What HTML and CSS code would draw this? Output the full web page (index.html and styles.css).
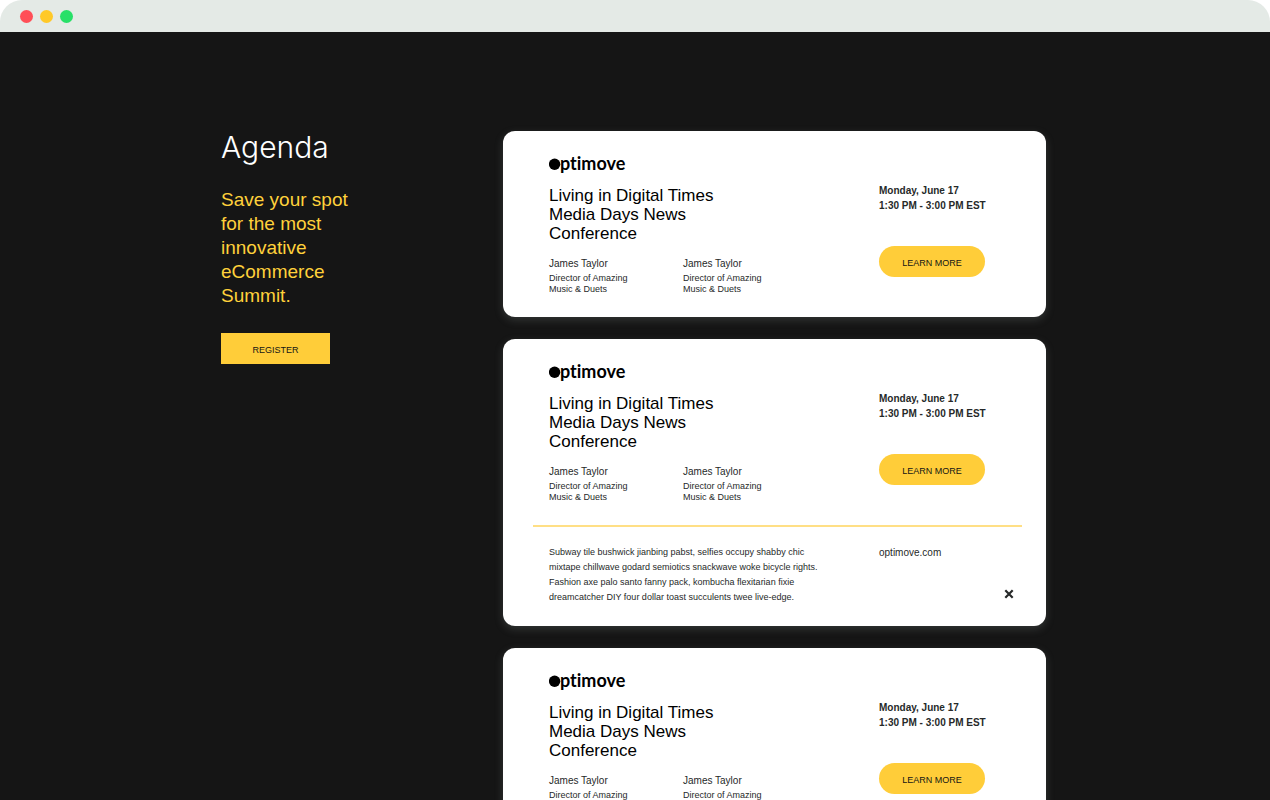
FILE: index.html
```html
<!DOCTYPE html>
<html lang="en">
<head>
<meta charset="utf-8">
<title>Agenda</title>
<link rel="stylesheet" href="styles.css">
</head>
<body>
<div class="window">
  <header class="titlebar">
    <span class="dot dot-red"></span>
    <span class="dot dot-yellow"></span>
    <span class="dot dot-green"></span>
  </header>
  <main class="page">
    <div class="container">
      <section class="intro">
        <h1 class="intro-title">Agenda</h1>
        <p class="intro-text">Save your spot for the most innovative eCommerce Summit.</p>
        <button class="register" type="button">REGISTER</button>
      </section>
      <section class="sessions">
        <article class="card">
          <div class="card-main">
            <div class="details">
              <svg class="logo" viewBox="0 0 80 26" role="img" aria-label="optimove"><circle cx="5.6" cy="15.2" r="5.7"/><text x="11" y="21" class="logo-text">ptimove</text></svg>
              <h2 class="title">Living in Digital Times Media Days News Conference</h2>
              <div class="speakers">
                <div class="speaker"><p class="name">James Taylor</p><p class="role">Director of Amazing Music &amp; Duets</p></div>
                <div class="speaker"><p class="name">James Taylor</p><p class="role">Director of Amazing Music &amp; Duets</p></div>
              </div>
            </div>
            <div class="schedule">
              <p class="time">Monday, June 17<br>1:30 PM - 3:00 PM EST</p>
              <button class="learn" type="button">LEARN MORE</button>
            </div>
          </div>
        </article>
        <article class="card">
          <div class="card-main">
            <div class="details">
              <svg class="logo" viewBox="0 0 80 26" role="img" aria-label="optimove"><circle cx="5.6" cy="15.2" r="5.7"/><text x="11" y="21" class="logo-text">ptimove</text></svg>
              <h2 class="title">Living in Digital Times Media Days News Conference</h2>
              <div class="speakers">
                <div class="speaker"><p class="name">James Taylor</p><p class="role">Director of Amazing Music &amp; Duets</p></div>
                <div class="speaker"><p class="name">James Taylor</p><p class="role">Director of Amazing Music &amp; Duets</p></div>
              </div>
            </div>
            <div class="schedule">
              <p class="time">Monday, June 17<br>1:30 PM - 3:00 PM EST</p>
              <button class="learn" type="button">LEARN MORE</button>
            </div>
          </div>
          <div class="card-more">
            <p class="summary">Subway tile bushwick jianbing pabst, selfies occupy shabby chic<br>mixtape chillwave godard semiotics snackwave woke bicycle rights.<br>Fashion axe palo santo fanny pack, kombucha flexitarian fixie<br>dreamcatcher DIY four dollar toast succulents twee live-edge.</p>
            <div class="more-side">
              <a class="site" href="#">optimove.com</a>
              <button class="close" type="button" aria-label="Close">
                <svg class="close-icon" viewBox="0 0 10 10" aria-hidden="true"><path d="M1.3 1.3 8.7 8.7M8.7 1.3 1.3 8.7"/></svg>
              </button>
            </div>
          </div>
        </article>
        <article class="card">
          <div class="card-main">
            <div class="details">
              <svg class="logo" viewBox="0 0 80 26" role="img" aria-label="optimove"><circle cx="5.6" cy="15.2" r="5.7"/><text x="11" y="21" class="logo-text">ptimove</text></svg>
              <h2 class="title">Living in Digital Times Media Days News Conference</h2>
              <div class="speakers">
                <div class="speaker"><p class="name">James Taylor</p><p class="role">Director of Amazing Music &amp; Duets</p></div>
                <div class="speaker"><p class="name">James Taylor</p><p class="role">Director of Amazing Music &amp; Duets</p></div>
              </div>
            </div>
            <div class="schedule">
              <p class="time">Monday, June 17<br>1:30 PM - 3:00 PM EST</p>
              <button class="learn" type="button">LEARN MORE</button>
            </div>
          </div>
        </article>
      </section>
    </div>
  </main>
</div>
</body>
</html>
```
FILE: styles.css
```css
* { box-sizing: border-box; margin: 0; padding: 0; }

body {
  background: #fff;
  color: #262929;
  font-family: "Liberation Sans", Arial, sans-serif;
}

button { border: 0; font-family: inherit; cursor: pointer; }

.window {
  display: flex;
  flex-direction: column;
  height: 100vh;
  overflow: hidden;
  border-radius: 22px 22px 0 0;
}

.titlebar {
  display: flex;
  flex: none;
  align-items: center;
  gap: 7px;
  height: 32px;
  padding: 0 20px;
  background: #e4eae6;
}

.dot { width: 13px; height: 13px; border-radius: 50%; }
.dot-red { background: #ff4f57; }
.dot-yellow { background: #ffc928; }
.dot-green { background: #28e068; }

.page {
  flex: 1;
  min-height: 0;
  padding: 99px 24px 0;
  background: #151515;
}

.container {
  display: grid;
  grid-template-columns: minmax(160px, 282px) minmax(0, 543px);
  max-width: 828px;
  margin: 0 auto;
}

.intro-title {
  color: #fff;
  font-family: Inter, "Liberation Sans", sans-serif;
  font-size: 30px;
  font-weight: 300;
  line-height: 32px;
}

.intro-text {
  max-width: 140px;
  margin-top: 25px;
  color: #ffd13b;
  font-size: 19px;
  line-height: 24px;
}

.register {
  width: 109px;
  height: 31px;
  margin-top: 25px;
  padding-top: 2px;
  background: #ffcd39;
  color: #151515;
  font-size: 9px;
}

.sessions { display: flex; flex-direction: column; gap: 22px; }

.card {
  border-radius: 12px;
  background: #fff;
  box-shadow: 0 3px 8px rgba(120, 130, 126, 0.3);
}

.card-main {
  display: grid;
  grid-template-columns: 330px 1fr;
  padding: 18px 24px 22px 46px;
}

.logo { display: block; width: 80px; height: 26px; fill: #000; }

.logo-text {
  font-family: Lato, sans-serif;
  font-size: 18px;
  font-variant-ligatures: none;
  font-weight: 700;
}

.title {
  max-width: 180px;
  margin-top: 11px;
  color: #000;
  font-size: 17px;
  font-weight: 400;
  line-height: 19px;
}

.speakers { display: grid; grid-template-columns: 134px 134px; margin-top: 14px; }

.speaker { max-width: 90px; }

.name { font-size: 10px; line-height: 14px; }

.role { margin-top: 2px; font-size: 9px; line-height: 11px; }

.time { margin-top: 34px; font-size: 10px; font-weight: 700; line-height: 15px; }

.learn {
  width: 106px;
  height: 31px;
  margin-top: 33px;
  padding-top: 2px;
  border-radius: 16px;
  background: #ffcd39;
  color: #151515;
  font-size: 9px;
}

.card-more {
  display: grid;
  grid-template-columns: 330px 1fr;
  margin: 0 24px 0 30px;
  padding: 18px 0 21px 16px;
  border-top: 2px solid #ffdf85;
}

.summary { font-size: 9px; line-height: 15px; }

.more-side {
  display: flex;
  flex-direction: column;
  align-items: flex-start;
  justify-content: space-between;
}

.site { color: inherit; font-size: 10px; line-height: 15px; text-decoration: none; }

.close {
  align-self: flex-end;
  width: 18px;
  height: 18px;
  margin: 0 4px 2px 0;
  background: none;
}

.close-icon {
  display: block;
  width: 10px;
  height: 10px;
  margin: 0 auto;
  fill: none;
  stroke: #262929;
  stroke-width: 2.2;
}
```
